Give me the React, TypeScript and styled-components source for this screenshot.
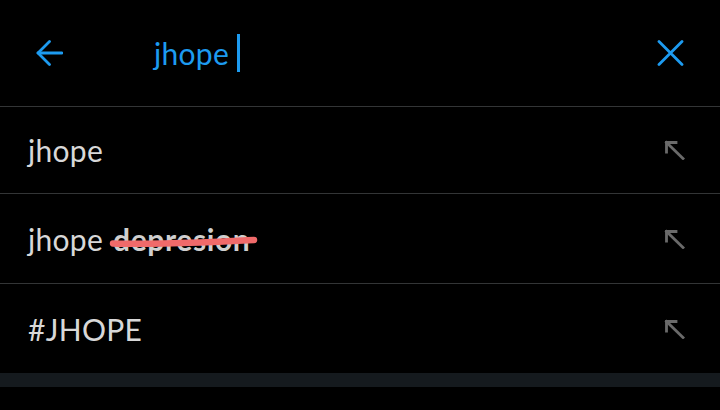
import React from "react";
import styled, { createGlobalStyle } from "styled-components";

const Global = createGlobalStyle`
  html, body { margin: 0; padding: 0; background: #000; }
  body { font-family: Lato, "Open Sans", sans-serif; }
`;

const Screen = styled.div`
  width: 720px;
  height: 410px;
  background: #000;
  display: flex;
  flex-direction: column;
  overflow: hidden;
`;

const Header = styled.header`
  height: 106px;
  flex: none;
  display: flex;
  align-items: center;
  padding: 0 36px;
  border-bottom: 1px solid #333536;
`;

const IconButton = styled.button`
  width: 27px;
  height: 26px;
  padding: 0;
  border: 0;
  background: transparent;
  display: flex;
  align-items: center;
  justify-content: center;
  color: #1d9bf0;
  cursor: pointer;
`;

const Query = styled.div`
  flex: 1;
  display: flex;
  align-items: center;
  margin-left: 91px;
  font-size: 30px;
  letter-spacing: 0.3px;
  color: #1d9bf0;
`;

const Caret = styled.span`
  display: inline-block;
  width: 3px;
  height: 38px;
  margin-left: 8px;
  background: #1d9bf0;
`;

const List = styled.ul`
  list-style: none;
  margin: 0;
  padding: 0;
`;

const Row = styled.li<{ $h: number; $last?: boolean }>`
  height: ${(p) => p.$h}px;
  display: flex;
  align-items: center;
  justify-content: space-between;
  padding: 0 35px 0 28px;
  border-bottom: ${(p) => (p.$last ? "0" : "1px solid #333536")};
  font-size: 30px;
  letter-spacing: 0.3px;
  color: #d8d8d8;
`;

const Label = styled.span`
  display: inline-flex;
  align-items: baseline;
  gap: 10px;
`;

const Struck = styled.span`
  position: relative;
  font-weight: 700;
  letter-spacing: 0.6px;
  color: #cfcfcf;
`;

const Scribble = styled.svg`
  position: absolute;
  left: -3px;
  top: 50%;
  width: 150px;
  height: 14px;
  margin-top: -3px;
  overflow: visible;
`;

const Band = styled.div`
  height: 14px;
  flex: none;
  background: #151a1e;
`;

const BackIcon = () => (
  <svg width="27" height="26" viewBox="0 0 27 26" fill="none" stroke="currentColor" strokeWidth="2.8" strokeLinecap="round" strokeLinejoin="round">
    <path d="M26 13H2" />
    <path d="M13.5 1.5L2 13l11.5 11.5" />
  </svg>
);

const CloseIcon = () => (
  <svg width="27" height="26" viewBox="0 0 27 26" fill="none" stroke="currentColor" strokeWidth="2.8" strokeLinecap="round">
    <path d="M2 1.5l23 23M25 1.5l-23 23" />
  </svg>
);

const FillIcon = () => (
  <svg width="21" height="20" viewBox="0 0 21 20" fill="none" stroke="#6a6a6a" strokeWidth="2.8" strokeLinecap="square">
    <path d="M2.5 2.5L19 18.5" />
    <path d="M2.5 12V2.5H12" />
  </svg>
);

const rows = [
  { h: 86, text: "jhope" },
  { h: 89, text: "jhope", struck: "depresion" },
  { h: 89, text: "#JHOPE" },
];

export default function App() {
  return (
    <>
      <Global />
      <Screen>
        <Header>
          <IconButton aria-label="Back">
            <BackIcon />
          </IconButton>
          <Query>
            jhope
            <Caret />
          </Query>
          <IconButton aria-label="Clear">
            <CloseIcon />
          </IconButton>
        </Header>
        <List>
          {rows.map((r, i) => (
            <Row key={i} $h={r.h} $last={i === rows.length - 1}>
              <Label>
                {r.text}
                {r.struck && (
                  <Struck>
                    {r.struck}
                    <Scribble viewBox="0 0 150 14">
                      <path
                        d="M3 7.5C30 8.5 60 7.5 90 6.5S130 4.5 144 4"
                        stroke="#f06a6a"
                        strokeWidth="6.5"
                        strokeLinecap="round"
                        fill="none"
                      />
                    </Scribble>
                  </Struck>
                )}
              </Label>
              <FillIcon />
            </Row>
          ))}
        </List>
        <Band />
      </Screen>
    </>
  );
}
